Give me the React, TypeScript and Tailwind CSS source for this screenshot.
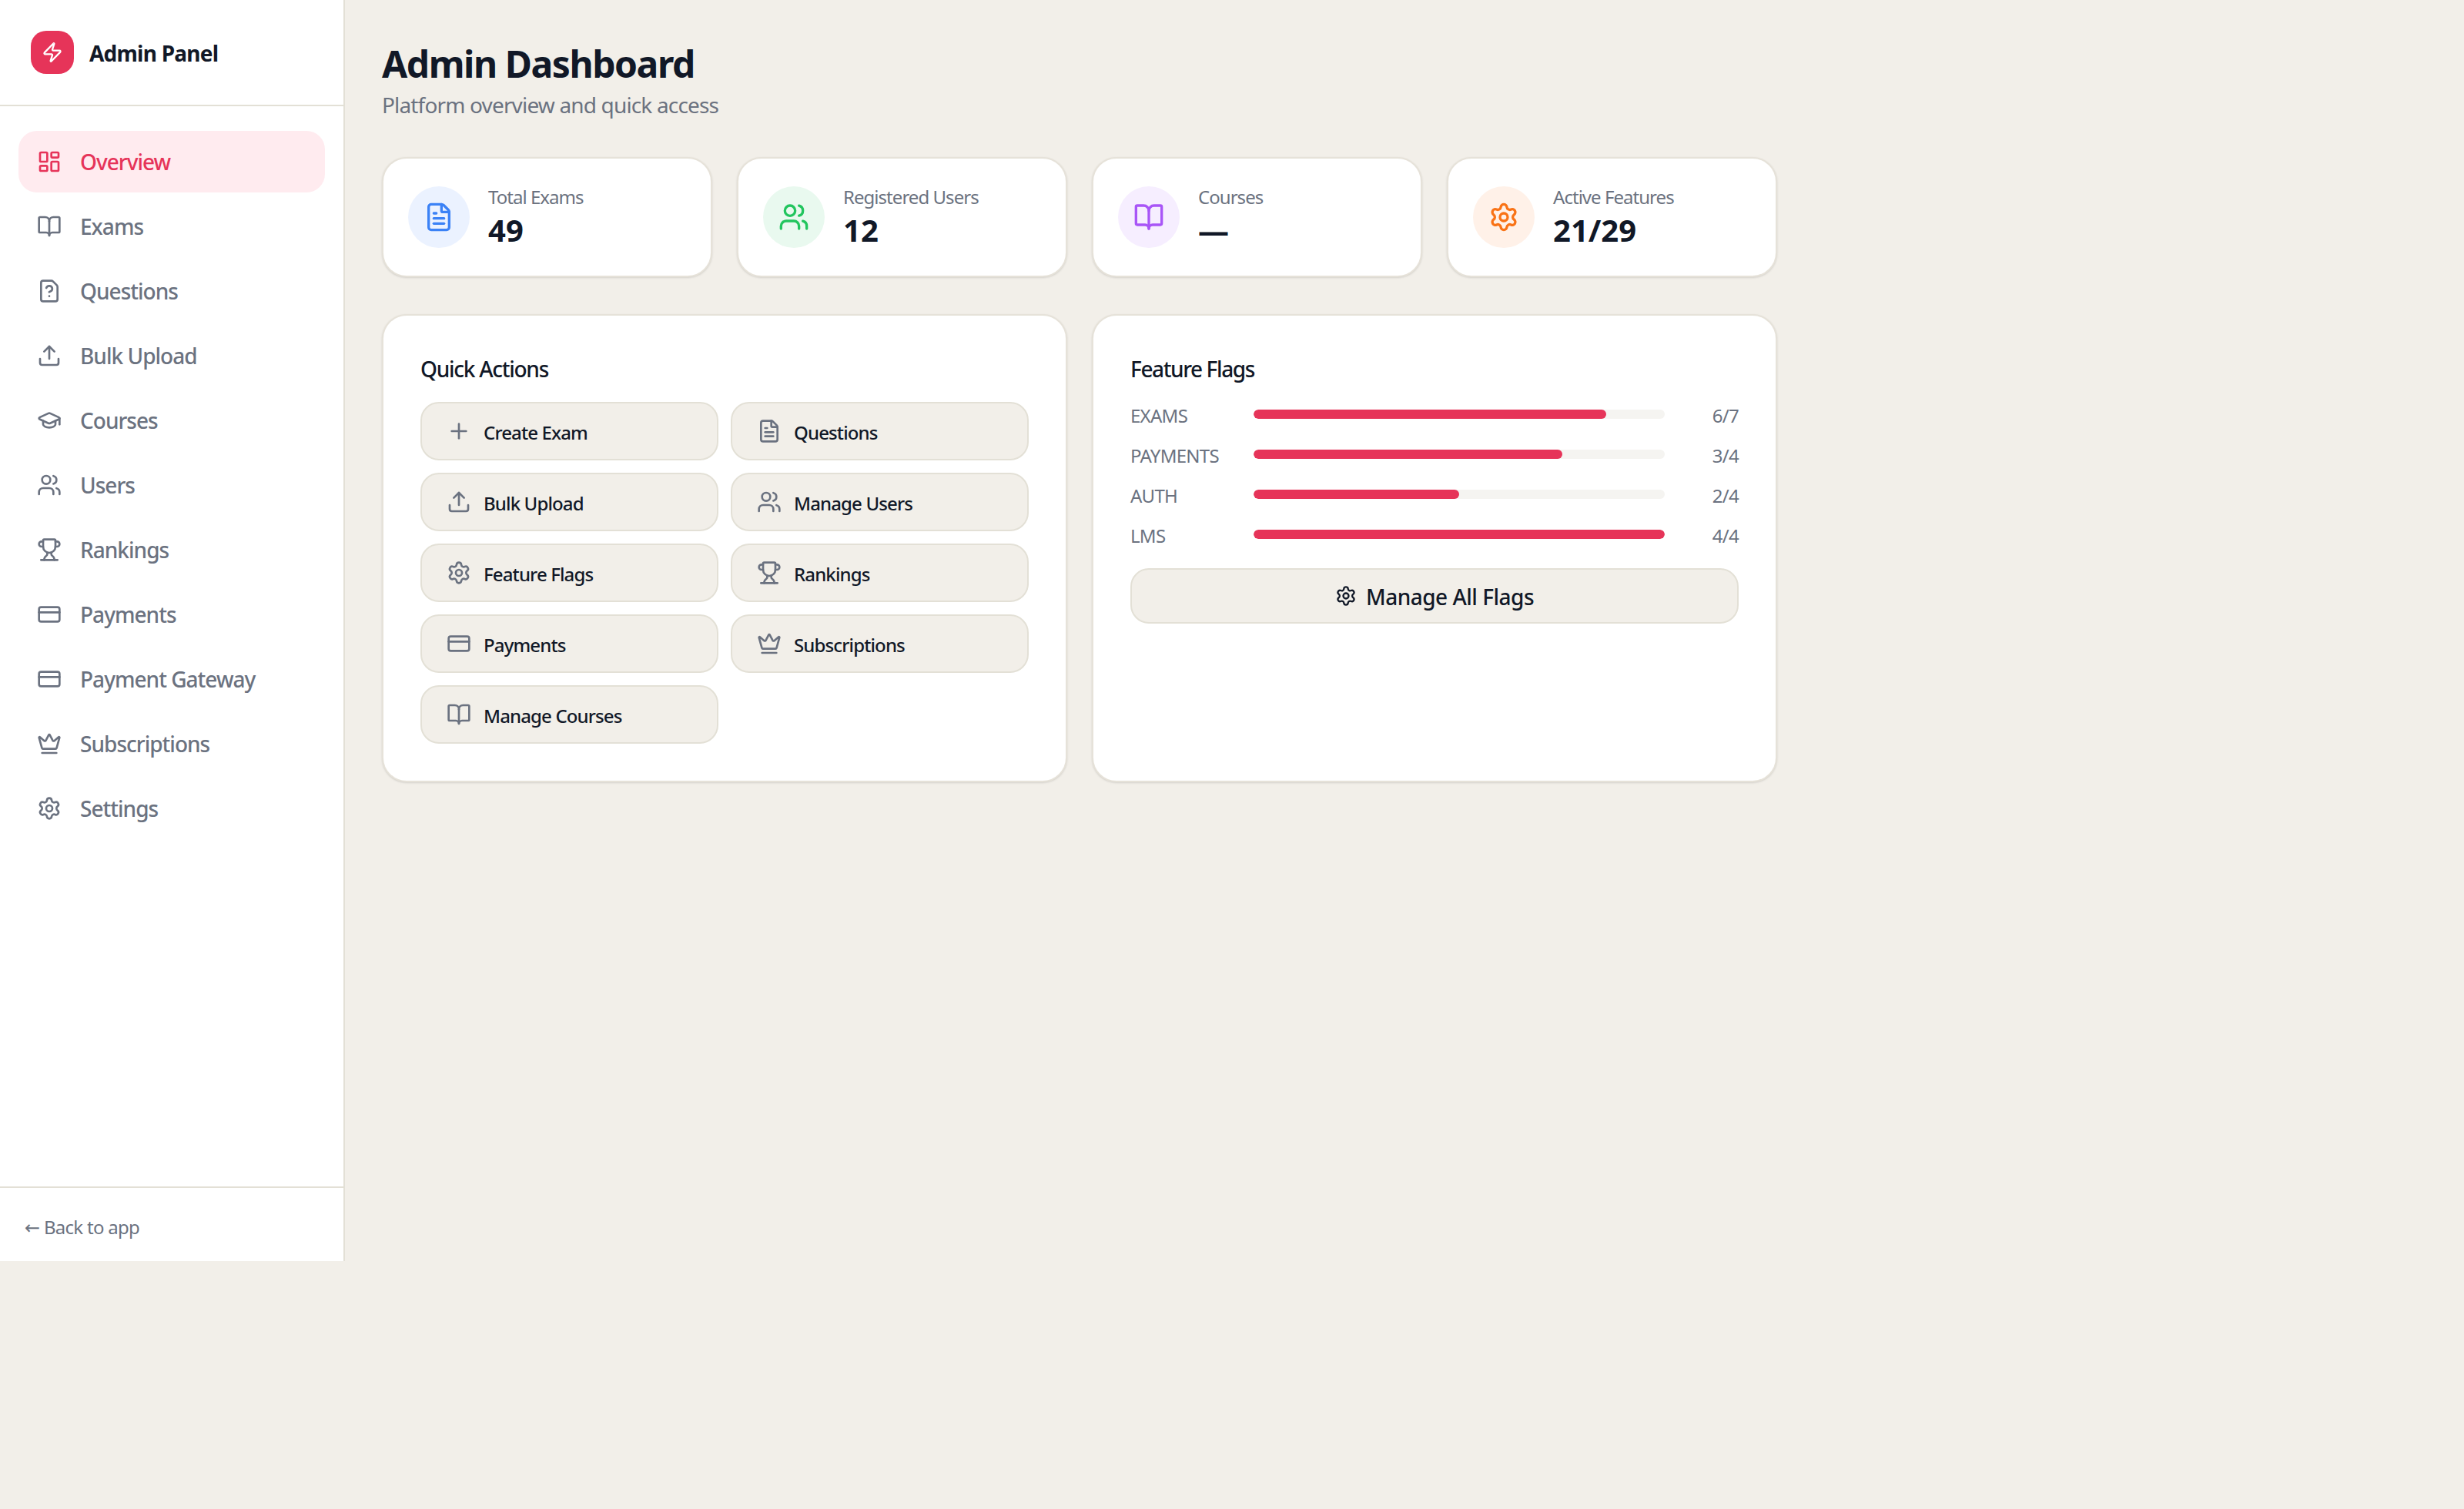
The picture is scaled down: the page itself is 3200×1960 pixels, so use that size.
import {
  BookOpen,
  CreditCard,
  Crown,
  FileQuestionMark,
  FileText,
  GraduationCap,
  LayoutDashboard,
  Plus,
  Settings,
  Trophy,
  Upload,
  Users,
  Zap,
} from "lucide-react";

const navItems = [
  { label: "Overview", icon: LayoutDashboard, active: true },
  { label: "Exams", icon: BookOpen },
  { label: "Questions", icon: FileQuestionMark },
  { label: "Bulk Upload", icon: Upload },
  { label: "Courses", icon: GraduationCap },
  { label: "Users", icon: Users },
  { label: "Rankings", icon: Trophy },
  { label: "Payments", icon: CreditCard },
  { label: "Payment Gateway", icon: CreditCard },
  { label: "Subscriptions", icon: Crown },
  { label: "Settings", icon: Settings },
];

const stats = [
  { label: "Total Exams", value: "49", icon: FileText, circle: "bg-[#ebf2ff]", color: "text-[#3b82f6]" },
  { label: "Registered Users", value: "12", icon: Users, circle: "bg-[#e9f9ef]", color: "text-[#22c55e]" },
  { label: "Courses", value: "—", icon: BookOpen, circle: "bg-[#f6eeff]", color: "text-[#a855f7]" },
  { label: "Active Features", value: "21/29", icon: Settings, circle: "bg-[#fff1e8]", color: "text-[#f97316]" },
];

const actions = [
  { label: "Create Exam", icon: Plus },
  { label: "Questions", icon: FileText },
  { label: "Bulk Upload", icon: Upload },
  { label: "Manage Users", icon: Users },
  { label: "Feature Flags", icon: Settings },
  { label: "Rankings", icon: Trophy },
  { label: "Payments", icon: CreditCard },
  { label: "Subscriptions", icon: Crown },
  { label: "Manage Courses", icon: BookOpen },
];

const flags = [
  { label: "EXAMS", on: 6, total: 7 },
  { label: "PAYMENTS", on: 3, total: 4 },
  { label: "AUTH", on: 2, total: 4 },
  { label: "LMS", on: 4, total: 4 },
];

function Sidebar() {
  return (
    <aside className="flex h-[1638px] w-[448px] shrink-0 flex-col border-r-2 border-[#e3e0d6] bg-white">
      <div className="flex items-center gap-5 border-b-2 border-[#e3e0d6] p-10">
        <div className="flex h-14 w-14 items-center justify-center rounded-[20px] bg-[#e63459]">
          <Zap className="h-7 w-7 text-white" />
        </div>
        <span className="pt-[2px] text-[28px] leading-[38px] font-bold tracking-[-0.027em] text-[#111827]">
          Admin Panel
        </span>
      </div>
      <nav className="flex flex-1 flex-col gap-1 px-6 py-8">
        {navItems.map((item) => (
          <a
            key={item.label}
            className={
              item.active
                ? "flex h-20 items-center gap-6 rounded-3xl bg-[#ffebef] px-6 text-[28px] font-medium tracking-[-0.035em] text-[#e63459]"
                : "flex h-20 items-center gap-6 rounded-3xl px-6 text-[28px] font-medium tracking-[-0.035em] text-[#6b7280]"
            }
          >
            <item.icon className="h-8 w-8 shrink-0" />
            <span className="pt-px leading-[39px]">{item.label}</span>
          </a>
        ))}
      </nav>
      <div className="border-t-2 border-[#e3e0d6] px-8 pt-[35px] pb-[27px]">
        <a className="block text-2xl leading-8 tracking-[-0.03em] text-[#6b7280]">
          <span className="font-['DejaVu_Sans',sans-serif]">←</span> Back to app
        </a>
      </div>
    </aside>
  );
}

function QuickActions() {
  return (
    <div className="rounded-[32px] border-2 border-[#e6e2d9] bg-white p-12 shadow-sm">
      <h2 className="mb-6 pt-[2px] text-[28px] leading-[38px] font-medium tracking-[-0.045em] text-[#111827]">
        Quick Actions
      </h2>
      <div className="grid grid-cols-2 gap-4">
        {actions.map((a) => (
          <button
            key={a.label}
            type="button"
            className="flex items-center gap-4 rounded-3xl border-2 border-[#e3e0d6] bg-[#f2efe9] px-8 py-5 text-2xl font-medium tracking-[-0.036em] text-[#111827]"
          >
            <a.icon className="h-8 w-8 shrink-0 text-[#6b7280]" />
            <span className="pt-1 leading-7">{a.label}</span>
          </button>
        ))}
      </div>
    </div>
  );
}

function FeatureFlags() {
  return (
    <div className="rounded-[32px] border-2 border-[#e6e2d9] bg-white p-12 shadow-sm">
      <h2 className="mb-6 pt-[2px] text-[28px] leading-[38px] font-medium tracking-[-0.05em] text-[#111827]">
        Feature Flags
      </h2>
      <div className="flex flex-col gap-5">
        {flags.map((f) => (
          <div key={f.label} className="flex h-8 items-center text-2xl tracking-[-0.03em] text-[#6b7280]">
            <span className="w-[160px] shrink-0 pt-[3px] leading-[29px]">{f.label}</span>
            <div className="h-3 flex-1 overflow-hidden rounded-full bg-[#f5f4f1]">
              <div
                className="h-full rounded-full bg-[#e63459]"
                style={{ width: `${(f.on / f.total) * 100}%` }}
              />
            </div>
            <span className="w-[96px] shrink-0 pt-[3px] text-right leading-[29px]">
              {f.on}/{f.total}
            </span>
          </div>
        ))}
      </div>
      <button
        type="button"
        className="mt-7 flex h-[72px] w-full items-center justify-center gap-3 rounded-3xl border-2 border-[#e3e0d6] bg-[#f2efe9] text-[28px] font-medium tracking-[-0.018em] text-[#111827]"
      >
        <Settings className="h-7 w-7" />
        <span className="pt-[2px] leading-[38px]">Manage All Flags</span>
      </button>
    </div>
  );
}

export default function App() {
  return (
    <div className="flex min-h-screen items-start bg-[#f2efe9] font-['Noto_Sans','Open_Sans',sans-serif]">
      <Sidebar />
      <main className="flex-1 p-12">
        <div className="w-[1812px]">
          <h1 className="pt-[3px] pb-px text-5xl leading-16 font-bold tracking-[-0.03em] text-[#111827]">
            Admin Dashboard
          </h1>
          <p className="mb-12 text-[28px] leading-10 tracking-[-0.03em] text-[#6b7280]">
            Platform overview and quick access
          </p>
          <div className="mb-12 grid grid-cols-4 gap-8">
            {stats.map((s) => (
              <div
                key={s.label}
                className="flex items-center gap-6 rounded-[32px] border-2 border-[#e6e2d9] bg-white p-8 shadow-sm"
              >
                <div className={`flex h-20 w-20 shrink-0 items-center justify-center rounded-full ${s.circle}`}>
                  <s.icon className={`h-10 w-10 ${s.color}`} />
                </div>
                <div>
                  <div className="pt-[3px] text-2xl leading-[29px] tracking-[-0.04em] text-[#6b7280]">{s.label}</div>
                  <div className="pt-px text-[40px] leading-[55px] font-bold text-[#111827]">{s.value}</div>
                </div>
              </div>
            ))}
          </div>
          <div className="grid grid-cols-2 gap-8">
            <QuickActions />
            <FeatureFlags />
          </div>
        </div>
      </main>
    </div>
  );
}
